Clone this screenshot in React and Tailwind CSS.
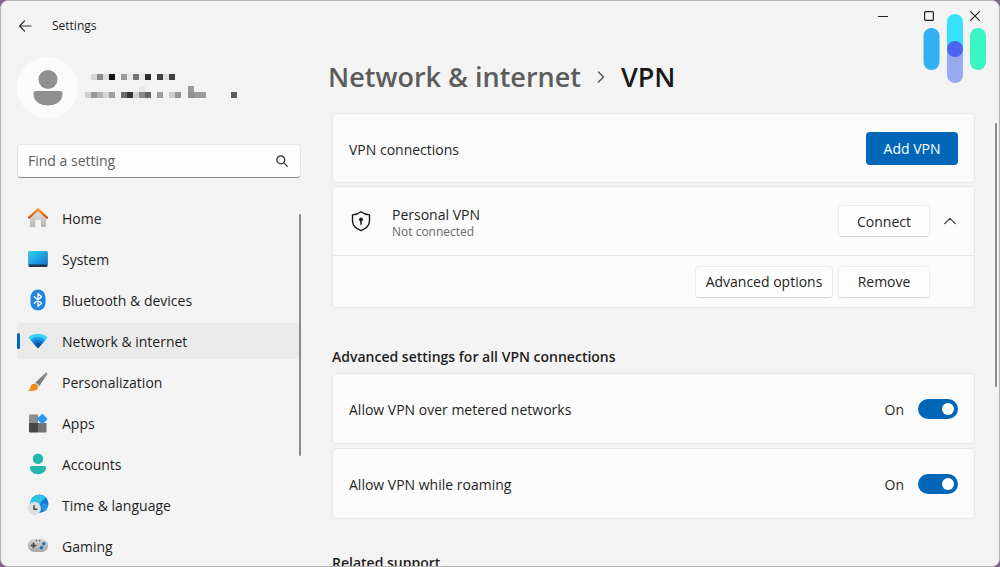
import React, { useState } from 'react';

const HomeIcon = () => (
  <svg width="20" height="20" viewBox="0 0 20 20">
    <defs>
      <linearGradient id="homeWall" x1="0" y1="0" x2="0" y2="1">
        <stop offset="0" stopColor="#e4e4e4" />
        <stop offset="1" stopColor="#b4b4b4" />
      </linearGradient>
      <linearGradient id="homeRoof" x1="0" y1="0" x2="0" y2="1">
        <stop offset="0" stopColor="#f79420" />
        <stop offset="1" stopColor="#d9520f" />
      </linearGradient>
    </defs>
    <path d="M2 9 10 2l8 7v9.2a.8.8 0 0 1-.8.8H13v-6.500a.8.8 0 0 0-.8-.8H8a.8.8 0 0 0-.8.8V19H2.800a.8.8 0 0 1-.8-.8Z" fill="url(#homeWall)" />
    <path d="M1 9.600 10 1.400l9 8.200" fill="none" stroke="url(#homeRoof)" strokeWidth="2.400" strokeLinecap="round" strokeLinejoin="round" />
  </svg>
);

const SystemIcon = () => (
  <svg width="20" height="20" viewBox="0 0 20 20">
    <defs>
      <linearGradient id="sysScreen" x1="0" y1="0" x2="1" y2="1">
        <stop offset="0" stopColor="#31d5ee" />
        <stop offset="1" stopColor="#1173d2" />
      </linearGradient>
    </defs>
    <rect x="0.500" y="2" width="19" height="16" rx="1.500" fill="#20364c" />
    <path d="M.5 3.500A1.500 1.500 0 0 1 2 2h16a1.500 1.500 0 0 1 1.500 1.500V15.500H.5Z" fill="url(#sysScreen)" />
  </svg>
);

const BluetoothIcon = () => (
  <svg width="20" height="20" viewBox="0 0 20 20" overflow="visible">
    <rect x="2.500" y="-0.500" width="15" height="21" rx="7.500" fill="#1f84e4" />
    <path d="m6.300 6.700 7.200 6.600L10 16.500v-13l3.500 3.200-7.200 6.600" fill="none" stroke="#fff" strokeWidth="1.400" strokeLinejoin="round" strokeLinecap="round" />
  </svg>
);

const NetworkIcon = () => (
  <svg width="20" height="20" viewBox="0 0 20 20">
    <path d="M10 17.300 0.400 6.600C3 4 6.300 2.800 10 2.800S17 4 19.600 6.600Z" fill="#35d6f6" />
    <path d="M10 17.300 2.600 9C4.700 7 7.200 5.900 10 5.900S15.300 7 17.400 9Z" fill="#1b9de6" />
    <path d="M10 17.300 4.600 11.300C6 9.900 7.900 9 10 9s4 .9 5.400 2.300Z" fill="#1273cc" />
    <path d="M10 17.300 6.700 13.600C7.600 12.600 8.700 12 10 12s2.400.6 3.300 1.600Z" fill="#0b4ea3" />
  </svg>
);

const BrushIcon = () => (
  <svg width="20" height="20" viewBox="0 0 20 20">
    <defs>
      <linearGradient id="brushStick" x1="1" y1="0" x2="0" y2="1">
        <stop offset="0" stopColor="#9a9a9a" />
        <stop offset="1" stopColor="#666" />
      </linearGradient>
    </defs>
    <path d="M17.300.9c1.200-.9 2.700.4 1.900 1.700L11 14.400 7 11Z" fill="url(#brushStick)" />
    <path d="m7.800 10.300 3.900 3.300-1.300 1.700L6.300 12Z" fill="#d0d0d0" />
    <path d="M6.400 11.800c1.700 0 4 1.900 3.600 3.900-.5 2.600-3.500 3.600-9.200 3.200-.5 0-.5-.6-.1-.8 2-1 1.400-2.300 2.100-4 .6-1.500 2-2.300 3.600-2.300Z" fill="#f28a1e" />
  </svg>
);

const AppsIcon = () => (
  <svg width="20" height="20" viewBox="0 0 20 20" overflow="visible">
    <path d="M1 2.500A1 1 0 0 1 2 1.500h8V10H1Z" fill="#8c8c8c" />
    <path d="M1 10h9v9.500H2a1 1 0 0 1-1-1Z" fill="#464646" />
    <path d="M10 10h8.500v8.500a1 1 0 0 1-1 1H10Z" fill="#737373" />
    <rect x="10.500" y="2.200" width="7.600" height="7.600" rx="1" transform="rotate(45 14.300 6)" fill="#2a97ee" />
  </svg>
);

const AccountsIcon = () => (
  <svg width="20" height="20" viewBox="0 0 20 20" overflow="visible">
    <circle cx="10" cy="4.700" r="5.200" fill="#20b9ab" />
    <path d="M3.500 12h13A1.500 1.500 0 0 1 18 13.500c0 4-3.600 6.700-8 6.700s-8-2.700-8-6.700A1.500 1.500 0 0 1 3.500 12Z" fill="#20b9ab" />
  </svg>
);

const TimeIcon = () => (
  <svg width="20" height="20" viewBox="0 0 20 20" overflow="visible">
    <circle cx="11.300" cy="8.800" r="9.200" fill="#1478d6" />
    <path d="M4 3.200C8-1.500 15-1 18 2.500c-2 .5-2 2.500-4 3.500s-1 4-4 4-4-2-7.500-1.500C2.600 6.500 3 4.600 4 3.200Z" fill="#2cc3e8" />
    <path d="M15 8c2 0 3 1.500 5.200 2-.6 3-2.500 5.600-5.200 6.800-.6-2-2-6 0-8.800Z" fill="#1f9ae8" />
    <circle cx="6.400" cy="13.400" r="6.600" fill="#dedede" />
    <path d="M6 10v4.300h3.300" fill="none" stroke="#444" strokeWidth="1.400" />
  </svg>
);

const GamingIcon = () => (
  <svg width="20" height="20" viewBox="0 0 20 20" overflow="visible">
    <defs>
      <linearGradient id="padBody" x1="0" y1="0" x2="0" y2="1">
        <stop offset="0" stopColor="#d2d2d2" />
        <stop offset="1" stopColor="#a8a8a8" />
      </linearGradient>
    </defs>
    <rect x="-0.300" y="3" width="20.600" height="13" rx="6.500" fill="url(#padBody)" />
    <path d="M5.500 6.700v5.600M2.700 9.500h5.600" stroke="#444" strokeWidth="1.600" />
    <circle cx="15.800" cy="7.700" r="1.800" fill="#1b76d1" />
    <circle cx="13.400" cy="11.700" r="1.800" fill="#1b76d1" />
    <circle cx="8.600" cy="4.800" r="0.700" fill="#555" />
    <circle cx="11.600" cy="4.800" r="0.700" fill="#555" />
  </svg>
);

const ShieldIcon = () => (
  <svg width="22" height="22" viewBox="0 0 22 22" fill="none">
    <path d="M11 1.700c2.500 2 5.400 3 8.500 3.200v5.600c0 4.900-2.700 8-8.500 10.200-5.800-2.200-8.500-5.300-8.500-10.200V4.900C5.600 4.700 8.500 3.700 11 1.700Z" stroke="#1a1a1a" strokeWidth="1.400" strokeLinejoin="round" />
    <circle cx="11" cy="9.500" r="1.900" fill="#1a1a1a" />
    <path d="M11 10v4.300" stroke="#1a1a1a" strokeWidth="1.500" strokeLinecap="round" />
  </svg>
);

// x, y, fill of every block that hides the account name and mail
const blocks = [
  [6, 6, '#d6d6d6'], [12, 6, '#8b8b8b'], [18, 6, '#dcdcdc'], [24, 6, '#111'],
  [36, 6, '#9a9a9a'], [42, 6, '#eaeaea'], [48, 6, '#767676'], [54, 6, '#eaeaea'],
  [60, 6, '#2c2c2c'], [72, 6, '#404040'], [78, 6, '#dedede'], [84, 6, '#404040'],
  [0, 24, '#d0d0d0'], [6, 24, '#979797'], [12, 24, '#b2b2b2'], [18, 24, '#d4d4d4'],
  [24, 24, '#a0a0a0'], [36, 24, '#6c6c6c'], [42, 24, '#343434'], [48, 24, '#cfcfcf'],
  [54, 24, '#8a8a8a'], [60, 24, '#666'], [72, 24, '#9c9c9c'], [84, 24, '#cccccc'],
  [90, 24, '#979797'], [54, 18, '#e6e6e6'], [103, 18, '#9a9a9a'], [103, 24, '#8f8f8f'],
  [109, 24, '#9a9a9a'], [115, 24, '#9a9a9a'], [146, 24, '#5c5c5c'],
];

const navItems = [
  { label: 'Home', icon: HomeIcon },
  { label: 'System', icon: SystemIcon },
  { label: 'Bluetooth & devices', icon: BluetoothIcon },
  { label: 'Network & internet', icon: NetworkIcon },
  { label: 'Personalization', icon: BrushIcon },
  { label: 'Apps', icon: AppsIcon },
  { label: 'Accounts', icon: AccountsIcon },
  { label: 'Time & language', icon: TimeIcon },
  { label: 'Gaming', icon: GamingIcon },
];

const Sidebar = () => {
  const [active, setActive] = useState('Network & internet');

  return (
    <aside className="flex w-[300px] shrink-0 flex-col pl-4">
      <div className="flex items-center">
        <div className="flex size-[61px] items-center justify-center rounded-full bg-[#fbfbfb]">
          <svg width="30" height="36" viewBox="0 0 30 36" fill="#909090">
            <circle cx="15" cy="9.500" r="9.500" />
            <path d="M3.500 21h23A3 3 0 0 1 29.500 24c0 7-6.500 11.500-14.500 11.500S.5 31 .5 24a3 3 0 0 1 3-3Z" />
          </svg>
        </div>
        <svg className="mb-1 ml-[7px]" width="152" height="36" viewBox="0 0 152 36" shapeRendering="crispEdges">
          {blocks.map(([x, y, fill]) => (
            <rect key={`${x}-${y}`} x={x} y={y} width="6" height="6" fill={fill} />
          ))}
        </svg>
      </div>

      <label className="mt-[26px] flex h-[34px] items-center rounded-[4px] border border-b-[#868686] border-[#e5e5e5] bg-[#fdfdfd] pl-[10px] pr-3">
        <input
          type="text"
          aria-label="Find a setting"
          placeholder="Find a setting"
          className="min-w-0 flex-1 bg-transparent text-sm text-[#1a1a1a] outline-none placeholder:text-[#5f5f5f]"
        />
        <svg width="12" height="12" viewBox="0 0 12 12" fill="none" stroke="#333" strokeWidth="1.200" strokeLinecap="round">
          <circle cx="4.800" cy="4.800" r="4" />
          <path d="m7.800 7.800 3.500 3.500" />
        </svg>
      </label>

      <nav className="relative mt-[22px] flex min-h-0 flex-1 flex-col gap-[5px] overflow-hidden">
        {navItems.map(({ label, icon: Icon }) => (
          <button
            key={label}
            type="button"
            onClick={() => setActive(label)}
            className={`flex h-9 w-full shrink-0 items-center rounded-[4px] text-left text-sm text-[#1f1f1f] ${active === label ? 'bg-[#eaeaea]' : ''}`}
          >
            <span className={`h-4 w-[3px] rounded-full ${active === label ? 'bg-[#0067c0]' : ''}`} />
            <span className="ml-2 flex size-5 items-center justify-center">
              <Icon />
            </span>
            <span className="ml-[14px] pt-[2px]">{label}</span>
          </button>
        ))}
        <span className="absolute right-0 top-[14px] h-[242px] w-[2px] rounded-full bg-[#8c8c8c]" />
      </nav>
    </aside>
  );
};

const ToggleRow = ({ id, label }) => {
  const [on, setOn] = useState(true);

  return (
    <div className="flex h-[71px] items-center rounded-[4px] border border-[#e8e8e8] bg-[#fbfbfb] px-4">
      <label htmlFor={id} className="flex-1 pt-[2px]">{label}</label>
      <span className="mr-[14px] pt-[2px]">{on ? 'On' : 'Off'}</span>
      <input
        id={id}
        type="checkbox"
        role="switch"
        checked={on}
        onChange={(e) => setOn(e.target.checked)}
        className="flex h-5 w-10 appearance-none items-center rounded-full bg-[#8a8a8a] px-1 before:size-3 before:rounded-full before:bg-white before:content-[''] checked:justify-end checked:bg-[#0067b8]"
      />
    </div>
  );
};

const plainButton = 'h-8 rounded-[4px] border border-[#ececec] border-b-[#d4d4d4] bg-[#fefefe]';

const App = () => {
  const [open, setOpen] = useState(true);

  return (
    <div className="h-screen overflow-hidden bg-[#806488] font-['Open_Sans',sans-serif] text-sm text-[#1f1f1f]">
      <div className="relative flex h-full flex-col overflow-hidden rounded-lg border border-[#b4b4b4] bg-[#f3f3f3]">
        <header className="flex h-[50px] shrink-0 items-center pl-4 pr-[19px]">
          <button type="button" aria-label="Back">
            <svg width="16" height="16" viewBox="0 0 16 16" fill="none" stroke="#333" strokeWidth="1.200" strokeLinecap="round" strokeLinejoin="round">
              <path d="M14 8H2.500M7.500 3l-5 5 5 5" />
            </svg>
          </button>
          <span className="ml-[19px] flex-1 text-xs">Settings</span>
          <div className="flex gap-9 self-start pt-[10px]">
            <button type="button" aria-label="Minimize">
              <svg width="10" height="10" viewBox="0 0 10 10"><path d="M0 5.500h10" stroke="#222" /></svg>
            </button>
            <button type="button" aria-label="Maximize">
              <svg width="10" height="10" viewBox="0 0 10 10"><rect x="0.600" y="0.600" width="8.800" height="8.800" rx="1" fill="none" stroke="#222" strokeWidth="1.200" /></svg>
            </button>
            <button type="button" aria-label="Close">
              <svg width="10" height="10" viewBox="0 0 10 10"><path d="m.3.3 9.400 9.400M9.700.3.3 9.700" stroke="#222" strokeWidth="1.100" /></svg>
            </button>
          </div>
        </header>

        <div className="flex min-h-0 flex-1">
          <div className="flex pt-[6px]">
            <Sidebar />
          </div>

          <main className="min-w-0 flex-1 overflow-hidden pl-[31px] pr-6">
            <h1 className="-ml-1 flex h-[50px] items-center pt-[2px] text-[27px] font-semibold leading-9">
              <a href="#network" className="text-[#5c5c5c]">Network &amp; internet</a>
              <svg className="mx-4" width="8" height="12" viewBox="0 0 8 12" fill="none" stroke="#5c5c5c" strokeWidth="1.600" strokeLinecap="round" strokeLinejoin="round">
                <path d="m1.500 1 5 5-5 5" />
              </svg>
              <span className="text-[#1a1a1a]">VPN</span>
            </h1>

            <section className="mt-3 flex h-[70px] items-center justify-between rounded-[4px] border border-[#e8e8e8] bg-[#fbfbfb] px-4">
              <span className="pt-1">VPN connections</span>
              <button type="button" className="h-[33px] w-[92px] rounded-[4px] bg-[#0067b8] pt-[2px] text-white">Add VPN</button>
            </section>

            <section className="mt-[3px] rounded-[4px] border border-[#e8e8e8] bg-[#fbfbfb]">
              <div className="flex h-[68px] items-center pl-[17px] pr-[18px]">
                <ShieldIcon />
                <div className="ml-5 flex-1 pt-1">
                  <p className="leading-[18px]">Personal VPN</p>
                  <p className="text-xs leading-4 text-[#6a6a6a]">Not connected</p>
                </div>
                <button type="button" className={`${plainButton} w-[92px] pt-[2px]`}>Connect</button>
                <button type="button" aria-label="Toggle details" className="ml-[14px]" onClick={() => setOpen(!open)}>
                  <svg width="12" height="8" viewBox="0 0 12 8" fill="none" stroke="#333" strokeWidth="1.100" strokeLinecap="round" strokeLinejoin="round">
                    <path d={open ? 'M.7 6.700 6 1.300l5.300 5.400' : 'M.7 1.300 6 6.700l5.300-5.400'} />
                  </svg>
                </button>
              </div>
              {open && (
                <div className="flex h-[52px] items-center justify-end gap-[5px] border-t border-[#e8e8e8] pr-11">
                  <button type="button" className={`${plainButton} w-[138px]`}>Advanced options</button>
                  <button type="button" className={`${plainButton} w-[92px]`}>Remove</button>
                </div>
              )}
            </section>

            <h2 className="mt-[39px] font-semibold">Advanced settings for all VPN connections</h2>
            <div className="mt-[6px] flex flex-col gap-1">
              <ToggleRow id="metered" label="Allow VPN over metered networks" />
              <ToggleRow id="roaming" label="Allow VPN while roaming" />
            </div>

            <h2 className="mt-[34px] font-semibold">Related support</h2>
          </main>
        </div>

        <span className="absolute right-[2px] top-[122px] h-[264px] w-[2px] rounded-full bg-[#8c8c8c]" />

        <svg className="absolute right-3 top-[13px]" width="64" height="70" viewBox="0 0 64 70">
          <rect x="0.500" y="14" width="16" height="42" rx="8" fill="#34aef4" />
          <rect x="24" y="27" width="16" height="42" rx="8" fill="#98a9f0" />
          <path d="M24 8a8 8 0 0 1 16 0v27H24Z" fill="#38e1fb" />
          <path d="M24 35h16v8H24Z" fill="#98a9f0" />
          <circle cx="32" cy="35" r="8" fill="#4b63f1" />
          <rect x="47" y="14" width="16" height="42" rx="8" fill="#39f6c2" />
        </svg>
      </div>
    </div>
  );
};

export default App;
